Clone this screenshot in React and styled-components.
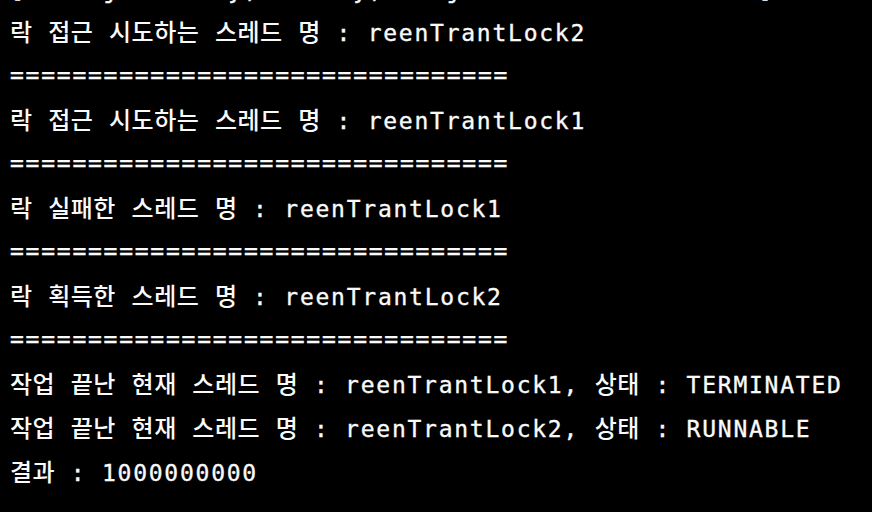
import React from "react";
import styled, { createGlobalStyle } from "styled-components";

const GlobalStyle = createGlobalStyle`
  html, body {
    margin: 0;
    padding: 0;
    background: #000;
  }
`;

const Console = styled.div`
  width: 872px;
  height: 512px;
  overflow: hidden;
  background: #000;
  color: #fafafa;
  font-family: "DejaVu Sans Mono", "Noto Sans CJK KR", monospace;
  font-size: 23px;
  letter-spacing: 1.75px;
  -webkit-text-stroke: 0.35px #fafafa;
  padding: 0 10px;
  box-sizing: border-box;
`;

const Scroll = styled.div`
  display: flex;
  flex-direction: column;
  margin-top: -35px;
`;

const Line = styled.div`
  height: 44px;
  line-height: ${({ $clipped }) => ($clipped ? "50px" : "44px")};
  white-space: pre;
`;

const Hangul = styled.span`
  font-family: "Noto Sans CJK KR", sans-serif;
  font-size: 24px;
  font-weight: 500;
  letter-spacing: 0.5px;
  -webkit-text-stroke: 0;
`;

// split a console line into hangul / latin runs so both keep their own pitch
const render = (text) =>
  text.split(/([\uAC00-\uD7A3]+)/).map((part, i) =>
    /[\uAC00-\uD7A3]/.test(part) ? <Hangul key={i}>{part}</Hangul> : part
  );

const SEP = "=".repeat(32);

const lines = [
  "[     j       y,      y,    j                   ]",
  "락 접근 시도하는 스레드 명 : reenTrantLock2",
  SEP,
  "락 접근 시도하는 스레드 명 : reenTrantLock1",
  SEP,
  "락 실패한 스레드 명 : reenTrantLock1",
  SEP,
  "락 획득한 스레드 명 : reenTrantLock2",
  SEP,
  "작업 끝난 현재 스레드 명 : reenTrantLock1, 상태 : TERMINATED",
  "작업 끝난 현재 스레드 명 : reenTrantLock2, 상태 : RUNNABLE",
  "결과 : 1000000000",
];

const App = () => (
  <>
    <GlobalStyle />
    <Console>
      <Scroll>
        {lines.map((l, i) => (
          <Line key={i} $clipped={i === 0}>
            {render(l)}
          </Line>
        ))}
      </Scroll>
    </Console>
  </>
);

export default App;
